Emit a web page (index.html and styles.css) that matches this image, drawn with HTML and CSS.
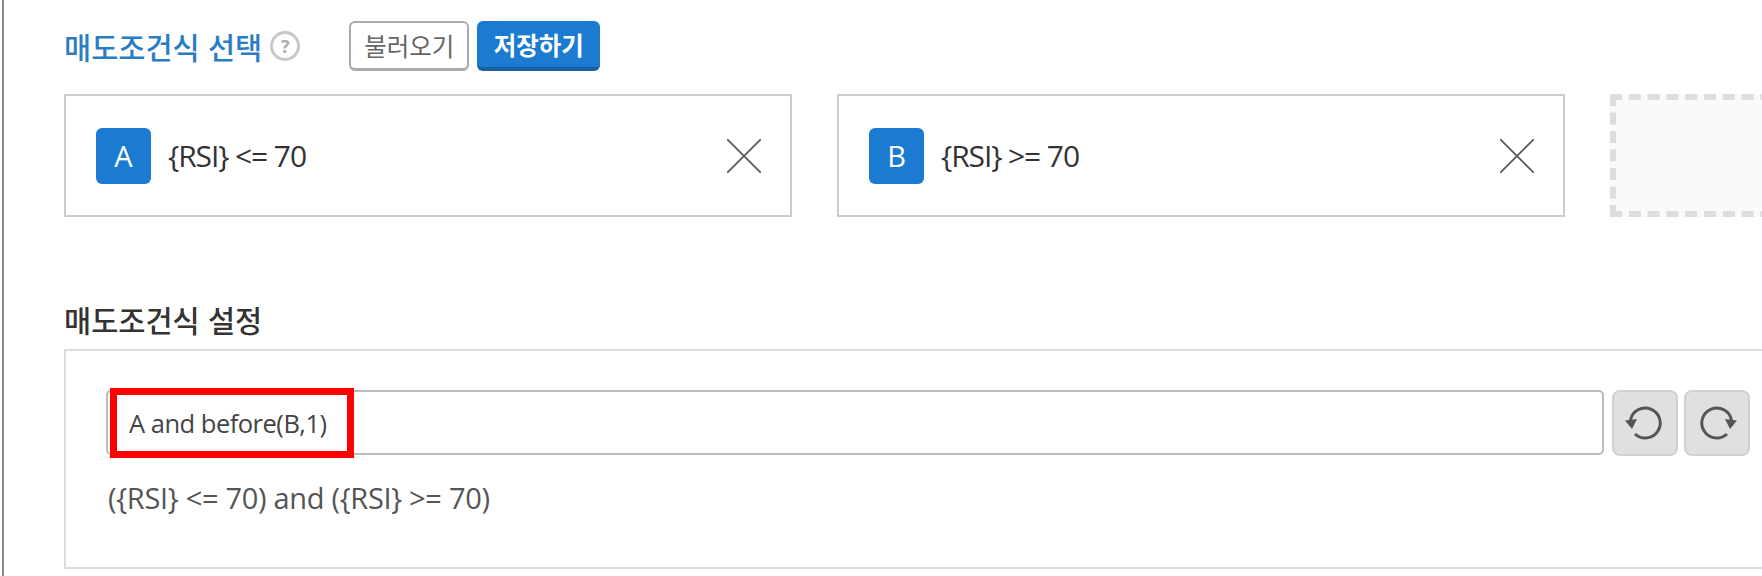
FILE: index.html
```html
<!DOCTYPE html>
<html lang="ko">
  <head>
    <meta charset="UTF-8" />
    <title>매도조건식</title>
    <link rel="stylesheet" href="styles.css">
  </head>
  <body>
    <div class="page">
      <div class="select-head">
        <h2 class="title-blue">매도조건식 선택</h2>
        <span class="help">?</span>
        <button class="btn btn-load">불러오기</button>
        <button class="btn btn-save">저장하기</button>
      </div>
      <div class="cards">
        <div class="card">
          <span class="badge">A</span>
          <span class="cond">{RSI} &lt;= 70</span>
          <svg class="close" viewBox="0 0 34 34"><path d="M0 0 34 34M34 0 0 34" /></svg>
        </div>
        <div class="card">
          <span class="badge">B</span>
          <span class="cond">{RSI} &gt;= 70</span>
          <svg class="close" viewBox="0 0 34 34"><path d="M0 0 34 34M34 0 0 34" /></svg>
        </div>
        <div class="card-empty"></div>
      </div>
      <h2 class="title-dark">매도조건식 설정</h2>
      <div class="setting">
        <div class="input-row">
          <div class="input-wrap">
            <input class="formula" type="text" value="A and before(B,1)" />
            <div class="highlight"></div>
          </div>
          <button class="icon-btn">
            <svg viewBox="0 0 36 36"><path class="arc" d="M3.5 15A15 15 0 1 1 8 29" /><path class="head" d="M-2 15.5 10 14 5 24Z" /></svg>
          </button>
          <button class="icon-btn">
            <svg viewBox="0 0 36 36"><path class="arc" d="M32.5 15A15 15 0 1 0 28 29" /><path class="head" d="M38 15.5 26 14 31 24Z" /></svg>
          </button>
        </div>
        <p class="expr">({RSI} &lt;= 70) and ({RSI} &gt;= 70)</p>
      </div>
    </div>
  </body>
</html>
```

FILE: styles.css
```css
* {
  box-sizing: border-box;
}
html,
body {
  margin: 0;
  height: 576px;
  overflow: hidden;
  background: #fff;
}
body {
  font-family: "Open Sans", "Noto Sans CJK KR", sans-serif;
}
.page {
  margin-left: 2px;
  width: 1760px;
  height: 576px;
  padding: 21px 0 0 60px;
  border-left: 2px solid #888;
  overflow: hidden;
}
h2 {
  margin: 0;
  font-family: "Noto Sans CJK KR", sans-serif;
  font-size: 29.5px;
  font-weight: 500;
  line-height: 40px;
  white-space: nowrap;
}
.select-head {
  display: flex;
  align-items: center;
  height: 50px;
}
.title-blue {
  color: #2a7dc4;
}
.help {
  display: flex;
  flex: none;
  align-items: center;
  justify-content: center;
  width: 30px;
  height: 30px;
  margin-left: 8px;
  border: 3px solid #c8c8c8;
  border-radius: 50%;
  color: #aaa;
  font-size: 18px;
  font-weight: 700;
}
.btn {
  flex: none;
  height: 50px;
  padding: 0;
  border-radius: 6px;
  font-family: "Noto Sans CJK KR", sans-serif;
  font-size: 24.5px;
}
.btn-load {
  width: 120px;
  margin-left: 49px;
  border: 2px solid #aaa;
  border-bottom-width: 3px;
  background: #fff;
  color: #666;
}
.btn-save {
  width: 123px;
  margin-left: 8px;
  border: 0;
  border-bottom: 4px solid #17609f;
  background: #1a7bd1;
  color: #fff;
  font-weight: 700;
}
.cards {
  display: flex;
  gap: 45px;
  margin-top: 23px;
}
.card {
  display: flex;
  flex: none;
  align-items: center;
  width: 728px;
  height: 123px;
  padding: 0 29px 0 30px;
  border: 2px solid #ccc;
}
.badge {
  display: flex;
  flex: none;
  align-items: center;
  justify-content: center;
  width: 55px;
  height: 56px;
  border-radius: 6px;
  background: #1a7bd1;
  color: #fff;
  font-size: 29px;
}
.cond {
  flex: 1;
  margin-left: 17px;
  color: #333;
  font-size: 30px;
  letter-spacing: -1.1px;
}
.close {
  flex: none;
  width: 34px;
  height: 34px;
}
.close path {
  fill: none;
  stroke: #555;
  stroke-width: 1.6;
}
.card-empty {
  flex: none;
  width: 200px;
  height: 123px;
  border: 6px dashed #ddd;
  background: #fafafa;
}
.title-dark {
  margin-top: 82px;
  color: #333;
}
.setting {
  width: 1760px;
  height: 220px;
  margin-top: 10px;
  padding: 39px 0 0 40px;
  border: 2px solid #ddd;
}
.input-row {
  display: flex;
  gap: 6px;
}
.input-wrap {
  position: relative;
  width: 1498px;
  margin-right: 2px;
}
.formula {
  display: block;
  width: 100%;
  height: 65px;
  padding: 0 0 0 21px;
  border: 2px solid #bbb;
  border-radius: 5px;
  outline: none;
  color: #444;
  font-family: "Open Sans", sans-serif;
  font-size: 25.5px;
  letter-spacing: -0.5px;
}
.highlight {
  position: absolute;
  top: -2px;
  left: 4px;
  width: 244px;
  height: 70px;
  border: 7px solid #f00;
}
.icon-btn {
  display: flex;
  align-items: center;
  justify-content: center;
  width: 66px;
  height: 66px;
  padding: 0;
  border: 2px solid #d0d0d0;
  border-radius: 8px;
  background: #e0e0e0;
}
.icon-btn svg {
  width: 36px;
  height: 36px;
  overflow: visible;
}
.arc {
  fill: none;
  stroke: #555;
  stroke-width: 3;
}
.head {
  fill: #555;
}
.expr {
  margin: 22px 0 0 2px;
  color: #555;
  font-size: 29px;
  line-height: 40px;
  letter-spacing: -0.3px;
}
```
